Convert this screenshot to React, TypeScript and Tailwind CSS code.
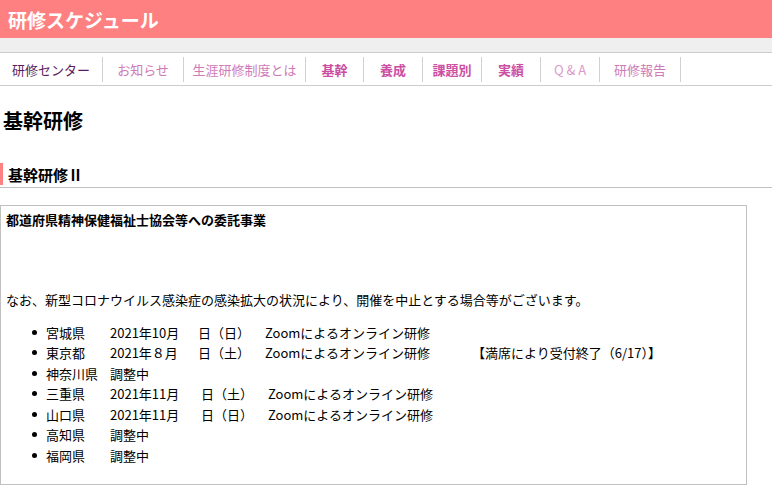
const navItems = [
  { label: "研修センター", w: "w-[103px]", cls: "text-[#5c1c5c]" },
  { label: "お知らせ", w: "w-[81px]", cls: "text-[#d07ab8]" },
  { label: "生涯研修制度とは", w: "w-[122px]", cls: "text-[#d07ab8]" },
  { label: "基幹", w: "w-[58px]", cls: "text-[#cc4fa3] font-bold" },
  { label: "養成", w: "w-[59px]", cls: "text-[#cc4fa3] font-bold" },
  { label: "課題別", w: "w-[59px]", cls: "text-[#cc4fa3] font-bold" },
  { label: "実績", w: "w-[59px]", cls: "text-[#cc4fa3] font-semibold" },
  { label: "Q & A", w: "w-[59px]", cls: "text-[#dd99c8]" },
  { label: "研修報告", w: "w-[81px]", cls: "text-[#d07ab8]" },
];

type Row = {
  pref: string;
  date?: string;
  day?: string;
  note?: string;
  extra?: string;
  wide?: boolean;
};

const rows: Row[] = [
  { pref: "宮城県", date: "2021年10月", day: "日（日）", note: "Zoomによるオンライン研修" },
  {
    pref: "東京都",
    date: "2021年８月",
    day: "日（土）",
    note: "Zoomによるオンライン研修",
    extra: "【満席により受付終了（6/17）】",
  },
  { pref: "神奈川県", date: "調整中" },
  { pref: "三重県", date: "2021年11月", day: "日（土）", note: "Zoomによるオンライン研修", wide: true },
  { pref: "山口県", date: "2021年11月", day: "日（日）", note: "Zoomによるオンライン研修", wide: true },
  { pref: "高知県", date: "調整中" },
  { pref: "福岡県", date: "調整中" },
];

export default function App() {
  return (
    <div
      className="w-[772px] h-[494px] overflow-hidden bg-white text-black"
      style={{ fontFamily: '"Noto Sans CJK JP", "Noto Sans", sans-serif' }}
    >
      <header className="h-[38px] bg-[#ff8080] flex items-center pl-[8px]">
        <h1 className="text-[19px] font-bold text-white leading-none">研修スケジュール</h1>
      </header>
      <div className="h-[14px] bg-[#efefef]" />
      <nav className="h-[34px] border-y border-[#cccccc] flex items-center">
        {navItems.map((item) => (
          <div
            key={item.label}
            className={`${item.w} h-[25px] flex items-center justify-center border-r border-[#d0d0d0] text-[13px] leading-none ${item.cls}`}
          >
            {item.label}
          </div>
        ))}
      </nav>

      <h2 className="mt-[21px] pl-[3px] text-[20px] font-bold leading-[28px]">基幹研修</h2>

      <div className="mt-[28px] pb-[2px] border-b border-[#c0c0c0]">
        <h3 className="border-l-[3px] border-[#ff8080] pl-[5px] h-[22px] flex items-center text-[15px] font-bold leading-none">
          基幹研修Ⅱ
        </h3>
      </div>

      <section className="mt-[17px] w-[747px] h-[280px] border border-[#c0c0c0] px-[5px] pt-[4px] text-[13px]">
        <p className="font-bold leading-[20px]">都道府県精神保健福祉士協会等への委託事業</p>
        <p className="mt-[60px] leading-[20px]">
          なお、新型コロナウイルス感染症の感染拡大の状況により、開催を中止とする場合等がございます。
        </p>
        <ul className="mt-[12px]">
          {rows.map((r) => (
            <li key={r.pref} className="flex items-center h-[20.5px] leading-none whitespace-nowrap">
              <span className="ml-[26px] w-[5px] h-[5px] rounded-full bg-black" />
              <span className="ml-[9px] w-[64px]">{r.pref}</span>
              <span className={r.wide ? "w-[91px]" : "w-[88px]"}>{r.date}</span>
              {r.day && <span className="w-[67px]">{r.day}</span>}
              {r.note && <span>{r.note}</span>}
              {r.extra && <span className="ml-[42px]">{r.extra}</span>}
            </li>
          ))}
        </ul>
      </section>
    </div>
  );
}
